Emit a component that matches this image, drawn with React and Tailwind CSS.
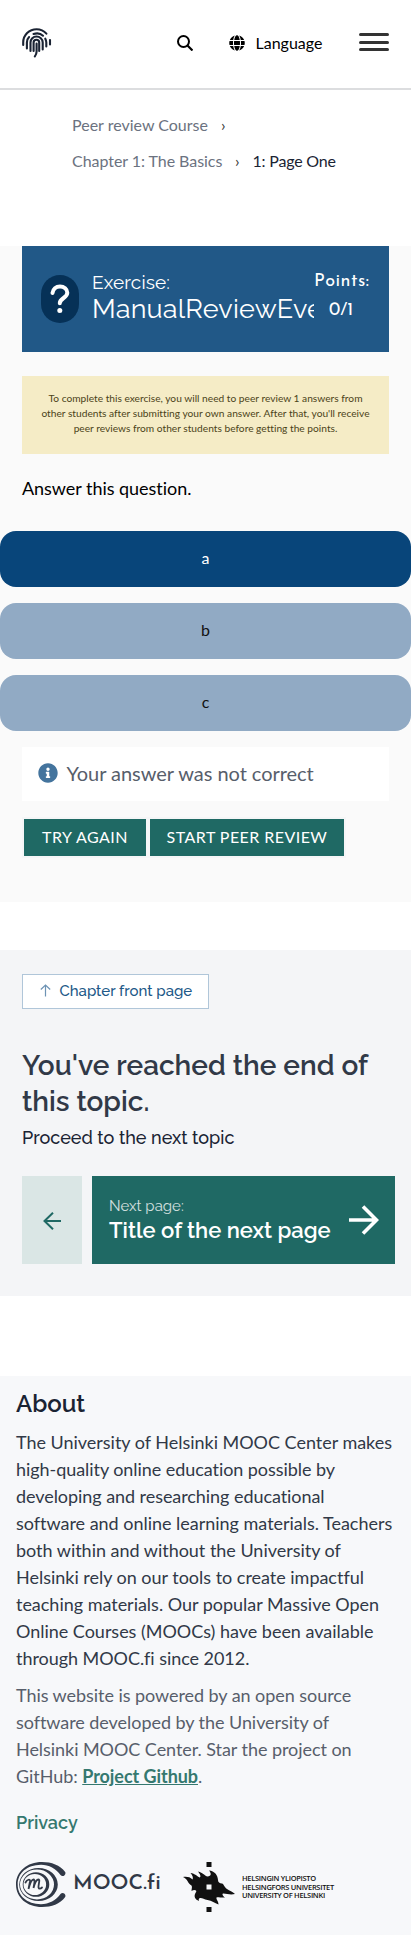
import React from "react";
import { FaGlobe, FaInfoCircle } from "react-icons/fa";

const raleway = "font-['Raleway','Lato',sans-serif]";
const josefin = "font-['Josefin_Sans','Lato',sans-serif]";

function Fingerprint() {
  return (
    <svg width="30" height="30" viewBox="0 0 30 30" fill="none" stroke="#1a2333" strokeWidth="2.100" strokeLinecap="round">
      <path d="M1.200 17v-2.500C1.200 7 7.200 1.200 14.600 1.200c4 0 7.400 1.700 9.800 4.400" />
      <path d="M28 12v4.500" />
      <path d="M24.300 18.500v-4c0-1.500-.4-2.700-1-3.800M11.500 6c4-1.300 7.300-.4 9.500 1.700" />
      <path d="M4.900 20.500v-6c0-2.100.8-4 2.200-5.400" />
      <path d="M8.500 23v-8.500c0-3.400 2.700-6 6-6s6.200 2.600 6.200 6v7" />
      <path d="M11.600 23v-8.500c0-3.600 5.600-3.600 5.600 0v8.500" />
      <path d="M14.600 15.500v8c0 2-.8 3.500-1.800 5" />
    </svg>
  );
}

function Header() {
  return (
    <header className="flex h-[90px] items-center border-b-2 border-[#dcdddf] px-[22px]">
      <div className="-mt-[2px]"><Fingerprint /></div>
      <svg className="ml-[125px] -mt-[2px]" width="16" height="16" viewBox="0 0 16 16" fill="none" stroke="#000" strokeWidth="2">
        <circle cx="6.500" cy="6.500" r="5.500" />
        <path d="M10.500 10.500l5 5" strokeWidth="2.200" />
      </svg>
      <FaGlobe className="ml-9 -mt-[2px] size-4 text-black" />
      <span className="-mt-[2px] ml-[10.500px] w-[67px] whitespace-nowrap text-[16px] text-black">Language</span>
      <div className="-mt-[4px] ml-auto flex h-[18px] w-[30px] flex-col justify-between">
        <i className="h-[3px] rounded bg-[#333]" />
        <i className="h-[3px] rounded bg-[#333]" />
        <i className="h-[3px] rounded bg-[#333]" />
      </div>
    </header>
  );
}

function Option({ label, selected }) {
  return (
    <button className={`flex h-14 w-full items-center justify-center rounded-[16px] pb-[2px] text-[16px] ${selected ? "bg-[#08457a] text-white" : "bg-[#91aac4] text-[#111]"}`}>
      {label}
    </button>
  );
}

function MoocLogo() {
  return (
    <svg width="50" height="45" viewBox="0 0 50 45" fill="#313947">
      <path d="M49.200 10C44 3 35.500 0 26 0 11 0 0 9.500 0 22.500S11 45 26 45c9.500 0 18-3 23.200-10 1.300-3-2.700-5.500-4.700-3C40 38.500 33 42 25 42.200 11 42 1.700 34 1.700 22.500S11 3 25 2.800C33 3 40 6.500 44.500 13c2 2.500 6 0 4.700-3z" />
      <path fillRule="evenodd" d="M22.500 6a19.300 16.500 0 1 1 0 33 19.300 16.500 0 1 1 0-33zM21 7.500a17 15 0 1 0 0 30 17 15 0 1 0 0-30z" />
      <path fillRule="evenodd" d="M20 10.200a13.300 12.300 0 1 1 0 24.600 13.300 12.300 0 1 1 0-24.600zM18.800 12a11.300 10.500 0 1 0 0 21 11.300 10.500 0 1 0 0-21z" />
      <path d="M9.500 20.500c1.500-3 5-4 4.500-1L12.500 27c1-4 3-9.500 5-9.500s.5 5 0 8.500c1-4 3-8.500 5-8.500s-.5 6 0 8c.3 1.500 2 1.500 3.500 0" fill="none" stroke="#313947" strokeWidth="1.800" strokeLinecap="round" />
    </svg>
  );
}

function HelsinkiLogo() {
  return (
    <svg width="52" height="50" viewBox="0 0 52 50" fill="#111">
      <path d="M23.500 0h5v5h-5zM23.500 45h5v5h-5z" />
      <path fillRule="evenodd" d="M0 15C4 14.500 7 15 9.500 17.500 10.500 16 9.500 13 7.500 11 12 11.500 14.500 14.500 16.500 15.500 18.500 15 17 12 15 9.500 20 10.500 22 14 24.500 14.500 28.500 14 28.500 11.500 26 8.500 31.500 9 34.800 13 35 18 35 20 36.500 21.500 39 21.500 41 22 41 25 44 27 46.500 29 49.500 29.500 52 32 48 33 44 32 40.500 31.500 39 31.500 39 33.500 42 35.500 38 36 34.500 34.500 33.500 35.500 33 37.500 35.500 39 35.500 42.500 31.500 41 29 38.500 24.500 38 21 37.500 19 35.500 17 36 15.500 36.500 15.500 37.500 16 39 12 37.500 11 34.500 12 32 12.500 30.500 14 29.500 13 28.500 12 27.500 10 28 8.500 29 8.500 26.500 9.500 25 8.500 23.500 7 22.500 5.500 21 4.500 19 3.500 17 2 16 0 15zM23.500 22.500v5h5v-5z" />
    </svg>
  );
}

export default function App() {
  return (
    <div className="w-[411px] bg-white font-['Lato',sans-serif] leading-normal [font-variant-ligatures:none]">
      <Header />
      <nav className="flex h-[156px] flex-col pl-[72px] pt-[17px] text-[16px] leading-9 text-[#6b7280]">
        <div className="flex"><span>Peer review Course</span><span className="ml-[13px] text-[#333]">›</span></div>
        <div className="flex"><span className="w-[150px] whitespace-nowrap tracking-[-0.05px]">Chapter 1: The Basics</span><span className="ml-[13px] text-[#333]">›</span><span className="ml-[13px] tracking-[-0.2px] text-[#1a2333]">1: Page One</span></div>
      </nav>

      <main className="h-[656px] bg-[#fafafa]">
        <section className="mx-[22px] flex h-[106px] bg-[#215887] pl-[19px] pt-[26px] text-white">
          <div className="mt-[3px] flex h-12 w-[38px] items-center justify-center rounded-[19px] bg-[#063157]">
            <svg width="20" height="30" viewBox="0 0 20 30" fill="none" stroke="white" strokeWidth="4" strokeLinecap="round">
              <path d="M2.500 9c.5-4 3.500-6.500 7.500-6.500s7.300 2.700 7.300 6.300c0 5.200-7.500 5.200-7.500 10.500" />
              <circle cx="9.800" cy="26.500" r="2.500" fill="white" stroke="none" />
            </svg>
          </div>
          <div className={`ml-[13px] w-[222px] overflow-hidden whitespace-nowrap ${raleway}`}>
            <div className="text-[19px] leading-[21px] tracking-[0.15px]">Exercise:</div>
            <div className="text-[27px] leading-[32px] tracking-[0.2px]">ManualReviewEverything</div>
          </div>
          <div className={`mt-px ${josefin}`}>
            <div className="text-[18px] leading-[18px] tracking-[0.5px]">Points:</div>
            <div className="mt-[10px] pl-[15px] text-[18px] leading-[20px]">0/1</div>
          </div>
        </section>

        <section className="mx-[22px] mt-6 h-[78px] whitespace-nowrap bg-[#f5ecc6] pt-[15px] text-center text-[10.200px] leading-[15px] text-[#4b4319]">
          To complete this exercise, you will need to peer review 1 answers from<br />
          other students after submitting your own answer. After that, you'll receive<br />
          peer reviews from other students before getting the points.
        </section>

        <p className="ml-[22px] mt-[21px] h-[56px] text-[18px] leading-[27px] tracking-[-0.04px] text-black">Answer this question.</p>
        <div className="flex flex-col gap-4">
          <Option label="a" selected />
          <Option label="b" />
          <Option label="c" />
        </div>

        <div className="mx-[22px] mt-4 flex h-[54px] items-center bg-white pl-4">
          <FaInfoCircle className="-mt-[3px] size-5 text-[#44749d]" />
          <span className="-mt-[2px] ml-[8.500px] text-[20px] tracking-[-0.04px] text-[#575e6b]">Your answer was not correct</span>
        </div>
        <div className="ml-[22px] mt-4 flex text-[16px] text-white">
          <button className="h-[41px] w-[126px] whitespace-nowrap border-2 border-[#f5f6f7] bg-[#1f6964] pb-[2px] tracking-[0.5px]">TRY AGAIN</button>
          <button className="h-[41px] w-[198px] whitespace-nowrap border-2 border-[#f5f6f7] bg-[#1f6964] pb-[2px] tracking-[0.45px]">START PEER REVIEW</button>
        </div>
      </main>

      <section className={`mt-12 h-[346px] bg-[#f4f5f7] pl-[22px] pt-6 ${raleway}`}>
        <a className="flex h-[35px] w-[187px] items-center whitespace-nowrap border border-[#b0c6d9] bg-white pl-[17px] text-[15px] font-medium text-[#215887]">
          <svg className="-mt-[2px]" width="11" height="13" viewBox="0 0 11 13" fill="none" stroke="#6d93b4" strokeWidth="1.200"><path d="M5.500 12.500V1M.8 5.500L5.500 1l4.700 4.500" /></svg>
          <span className="ml-[8.500px]">Chapter front page</span>
        </a>
        <h2 className="mt-[39px] whitespace-nowrap text-[28px] font-semibold leading-9 text-[#313947]">You've reached the end of<br />this topic.</h2>
        <p className="mt-[6px] whitespace-nowrap text-[18px] font-medium leading-[24px] text-[#1a2333]">Proceed to the next topic</p>
        <div className="mt-[26px] flex gap-[10px]">
          <a className="flex h-[88px] w-[60px] items-center justify-center bg-[#dae6e5]">
            <svg className="mt-[2px]" width="18" height="18" viewBox="0 0 18 18" fill="none" stroke="#1f6964" strokeWidth="2"><path d="M18 9H1M10 .8L1.500 9l8.500 8.200" /></svg>
          </a>
          <a className="flex h-[88px] w-[303px] items-center bg-[#1f6964] pl-[17px] text-white">
            <span className="flex w-[222px] flex-col whitespace-nowrap pb-px">
              <span className="text-[15px] leading-[20px] opacity-80">Next page:</span>
              <span className="text-[22px] font-semibold leading-[28px]">Title of the next page</span>
            </span>
            <svg className="ml-[18px]" width="30" height="30" viewBox="0 0 30 30" fill="none" stroke="white" strokeWidth="3.600"><path d="M0 15h28M14 1.500L27.500 15 14 28.500" /></svg>
          </a>
        </div>
      </section>

      <footer className="mt-20 h-[559px] bg-[#f7f8fa] pl-4 pt-[13px]">
        <h2 className={`text-[24px] font-semibold leading-[30px] text-[#1a2333] ${raleway}`}>About</h2>
        <p className="mt-[9.500px] whitespace-nowrap text-[18px] leading-[27px] tracking-[-0.02px] text-[#313947]">
          The University of Helsinki MOOC Center makes<br /><span className="tracking-[-0.06px]">high-quality online education possible by</span><br /><span className="tracking-[-0.06px]">developing and researching educational</span><br />software and online learning materials. Teachers<br />both within and without the University of<br />Helsinki rely on our tools to create impactful<br />teaching materials. Our popular Massive Open<br />Online Courses (MOOCs) have been available<br /><span className="tracking-[-0.05px]">through MOOC.fi since 2012.</span>
        </p>
        <p className="mt-[10px] whitespace-nowrap text-[18px] leading-[27px] tracking-[-0.055px] text-[#575e6b]">
          This website is powered by an open source<br />software developed by the University of<br />Helsinki MOOC Center. Star the project on<br />GitHub: <a className="font-bold text-[#35786f] underline">Project Github</a>.
        </p>
        <a className={`mt-[19.500px] block text-[18px] font-semibold leading-[27px] text-[#35786f] ${raleway}`}>Privacy</a>
        <div className="mt-[26px] flex">
          <MoocLogo />
          <span className={`ml-[7px] mt-[5px] w-[87px] whitespace-nowrap text-[21px] font-semibold leading-[34px] text-[#313947] ${josefin}`}>MOOC.fi</span>
          <span className="ml-[23px]"><HelsinkiLogo /></span>
          <span className="ml-[7px] mt-[12px] whitespace-nowrap font-['Open_Sans',sans-serif] text-[7.500px] font-semibold leading-[8.500px] tracking-[-0.3px] text-[#111]">HELSINGIN YLIOPISTO<br />HELSINGFORS UNIVERSITET<br />UNIVERSITY OF HELSINKI</span>
        </div>
      </footer>
    </div>
  );
}
